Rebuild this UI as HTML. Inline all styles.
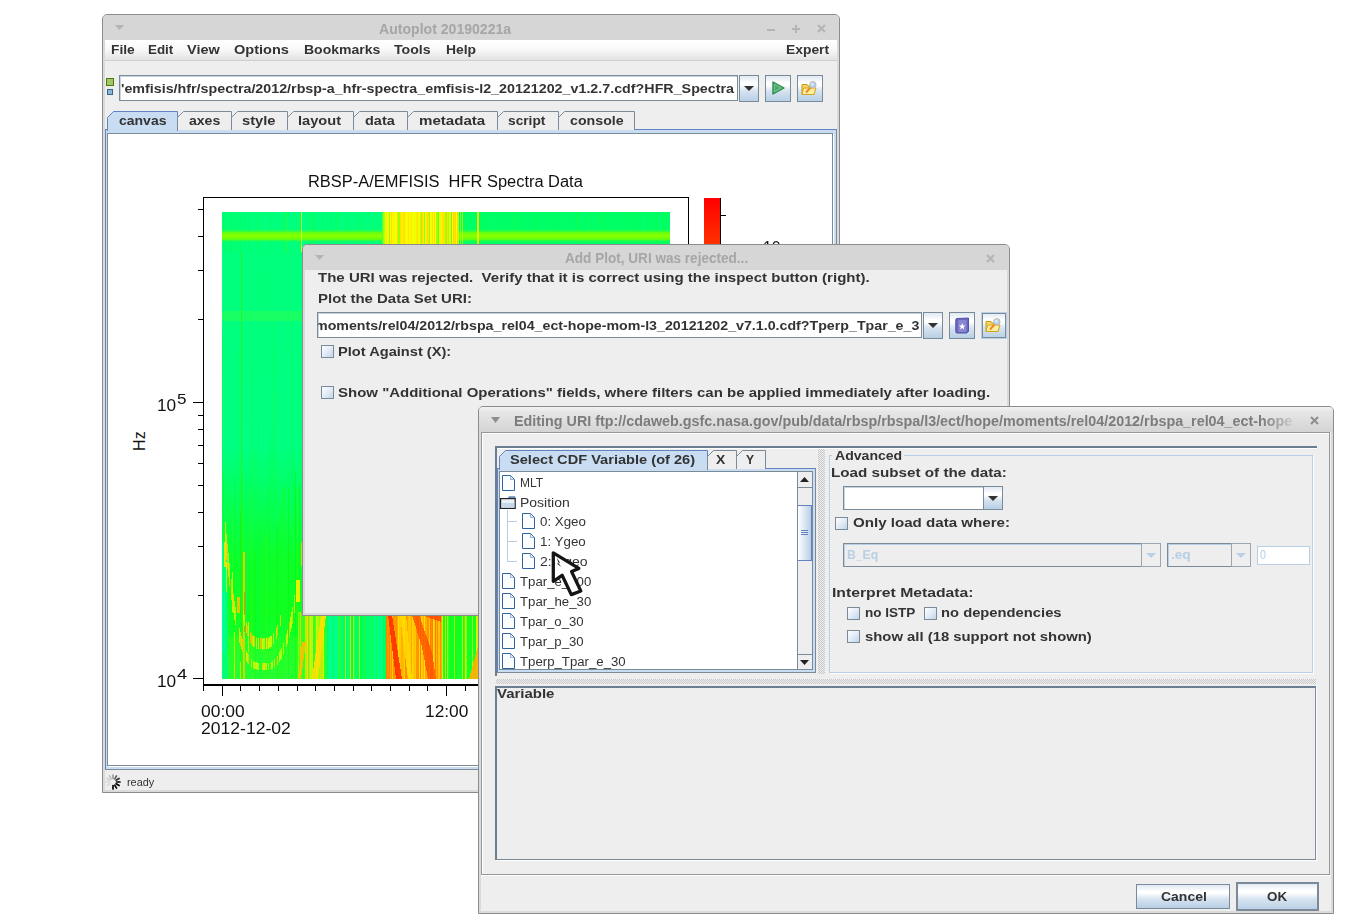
<!DOCTYPE html>
<html><head><meta charset="utf-8"><title>Autoplot</title>
<style>
*{box-sizing:border-box;margin:0;padding:0}
html,body{width:1345px;height:916px;overflow:hidden;background:#fff}
body{position:relative;font-family:"Liberation Sans",sans-serif;color:#333}
.a{position:absolute}
.t{position:absolute;white-space:nowrap;transform-origin:0 0;font-family:"Liberation Sans",sans-serif}
.btn{position:absolute;border:1px solid #7a8a99;background:linear-gradient(#dfe8f2 0%,#fff 28%,#fff 36%,#d6e3f0 60%,#b8cfe5 100%)}
.cb{position:absolute;width:13px;height:13px;border:1px solid #7a8a99;background:linear-gradient(135deg,#fdfeff 0%,#e6eef7 45%,#c0d4e8 100%)}
.tf{position:absolute;background:#fff;border:1px solid #7a8a99;box-shadow:inset 1px 1px 0 #c9d3dc}
</style></head><body>
<!-- main window -->
<div class="a" style="left:102px;top:14px;width:738px;height:779px;background:#eee;border:1px solid #8c8c8c;border-radius:5px 5px 0 0;box-shadow:inset 0 0 0 2px #dadada"></div>
<div class="a" style="left:103px;top:15px;width:736px;height:25px;background:#d6d6d6;border-radius:4px 4px 0 0"></div>
<svg class="a" style="left:115px;top:25px" width="9" height="5" viewBox="0 0 9 5"><path d="M0 0H9L4.5 5Z" fill="#b4b4b4"/></svg>
<div class="t" style="left:379.30px;top:20.50px;font-size:14px;font-weight:bold;line-height:16px;color:#a6a6a6;transform:scaleX(1.0052);">Autoplot 20190221a</div>
<div class="a" style="left:767px;top:29px;width:8px;height:2px;background:#b4b4b4"></div>
<div class="a" style="left:792px;top:28px;width:8px;height:2px;background:#b4b4b4"></div><div class="a" style="left:795px;top:25px;width:2px;height:8px;background:#b4b4b4"></div>
<svg class="a" style="left:817px;top:24px" width="9" height="9" viewBox="0 0 9 9"><path d="M1 1L8 8M8 1L1 8" stroke="#b4b4b4" stroke-width="2.2"/></svg>
<div class="a" style="left:105px;top:40px;width:732px;height:21px;background:linear-gradient(#fff 0%,#fafafa 40%,#ededed 75%,#e2e2e2 100%);border-bottom:1px solid #cfcfcf"></div>
<div class="t" style="left:111.20px;top:43.00px;font-size:12.5px;font-weight:bold;line-height:14px;color:#333;transform:scaleX(1.1028);">File</div>
<div class="t" style="left:148.00px;top:43.00px;font-size:12.5px;font-weight:bold;line-height:14px;color:#333;transform:scaleX(1.0718);">Edit</div>
<div class="t" style="left:187.00px;top:43.00px;font-size:12.5px;font-weight:bold;line-height:14px;color:#333;transform:scaleX(1.1564);">View</div>
<div class="t" style="left:234.40px;top:43.00px;font-size:12.5px;font-weight:bold;line-height:14px;color:#333;transform:scaleX(1.1637);">Options</div>
<div class="t" style="left:303.60px;top:43.00px;font-size:12.5px;font-weight:bold;line-height:14px;color:#333;transform:scaleX(1.1213);">Bookmarks</div>
<div class="t" style="left:394.30px;top:43.00px;font-size:12.5px;font-weight:bold;line-height:14px;color:#333;transform:scaleX(1.1309);">Tools</div>
<div class="t" style="left:445.50px;top:43.00px;font-size:12.5px;font-weight:bold;line-height:14px;color:#333;transform:scaleX(1.1110);">Help</div>
<div class="t" style="left:786.10px;top:43.00px;font-size:12.5px;font-weight:bold;line-height:14px;color:#333;transform:scaleX(1.1072);">Expert</div>
<div class="a" style="left:106px;top:78px;width:8px;height:8px;background:#a3c765;border:1px solid #4c7a10"></div>
<div class="a" style="left:107px;top:89px;width:6px;height:6px;background:#8cb6d6;border:1px solid #34678f"></div>
<div class="tf" style="left:119px;top:75px;width:619px;height:26px"></div>
<div class="t" style="left:121.00px;top:81.00px;font-size:13.5px;font-weight:bold;line-height:15px;color:#333;transform:scaleX(1.0578);">'emfisis/hfr/spectra/2012/rbsp-a_hfr-spectra_emfisis-l2_20121202_v1.2.7.cdf?HFR_Spectra</div>
<div class="btn" style="left:739px;top:75px;width:20px;height:27px"></div>
<svg class="a" style="left:744px;top:86px" width="10" height="5" viewBox="0 0 10 5"><path d="M0 0H10L5.0 5Z" fill="#333"/></svg>
<div class="btn" style="left:765px;top:75px;width:26px;height:27px"></div>
<svg class="a" style="left:772px;top:81px" width="13" height="14" viewBox="0 0 13 14"><path d="M1 1 L12 7 L1 13Z" fill="#6fc08a" stroke="#2b8a4a" stroke-width="1.4" stroke-linejoin="round"/><path d="M3 4.5 L8 7 L3 9.5Z" fill="#45a868"/></svg>
<div class="btn" style="left:797px;top:75px;width:26px;height:27px"></div>
<svg class="a" style="left:801px;top:81px" width="17" height="15" viewBox="0 0 17 15"><path d="M1 3.5 H6 L7 5 H13 V13.5 H1Z" fill="#f6d56a" stroke="#c79a10" stroke-width="1"/><path d="M2.5 7 H15 L13 13.5 H1Z" fill="#fdeea0" stroke="#d0a520" stroke-width="1"/><path d="M5 11.5 L10 6" stroke="#f08a20" stroke-width="2"/><circle cx="11.8" cy="3.8" r="3.3" fill="#aed0f4" stroke="#c9b9a8" stroke-width="1"/><circle cx="11.2" cy="3.2" r="1.6" fill="#d6e8fb"/></svg>
<div class="a" style="left:105px;top:129px;width:732px;height:641px;background:#c8ddf2;border:1px solid #7a8a99;border-top-color:#6382bf;border-left-color:#6382bf"></div>
<div class="a" style="left:107px;top:133px;width:726px;height:633px;background:#fff;border:1px solid #7a8a99;box-shadow:1px 1px 0 #fff"></div>
<svg class="a" style="left:107px;top:111px" width="71" height="20" viewBox="0 0 71 20"><path d="M0.5 20 V6.5 L6.5 0.5 H70.5 V20" fill="#c8ddf2" stroke="#6382bf" stroke-width="1"/></svg>
<div class="t" style="left:118.70px;top:113.70px;font-size:12.5px;font-weight:bold;line-height:14px;color:#333;transform:scaleX(1.1191);">canvas</div>
<svg class="a" style="left:177px;top:111px" width="55" height="19" viewBox="0 0 55 19"><path d="M0.5 19 V6.5 L6.5 0.5 H54.5 V19" fill="#eeeeee" stroke="#7a8a99" stroke-width="1"/></svg>
<div class="t" style="left:188.70px;top:113.70px;font-size:12.5px;font-weight:bold;line-height:14px;color:#333;transform:scaleX(1.1236);">axes</div>
<svg class="a" style="left:231px;top:111px" width="57" height="19" viewBox="0 0 57 19"><path d="M0.5 19 V6.5 L6.5 0.5 H56.5 V19" fill="#eeeeee" stroke="#7a8a99" stroke-width="1"/></svg>
<div class="t" style="left:242.40px;top:113.70px;font-size:12.5px;font-weight:bold;line-height:14px;color:#333;transform:scaleX(1.1773);">style</div>
<svg class="a" style="left:287px;top:111px" width="67" height="19" viewBox="0 0 67 19"><path d="M0.5 19 V6.5 L6.5 0.5 H66.5 V19" fill="#eeeeee" stroke="#7a8a99" stroke-width="1"/></svg>
<div class="t" style="left:298.00px;top:113.70px;font-size:12.5px;font-weight:bold;line-height:14px;color:#333;transform:scaleX(1.1687);">layout</div>
<svg class="a" style="left:353px;top:111px" width="55" height="19" viewBox="0 0 55 19"><path d="M0.5 19 V6.5 L6.5 0.5 H54.5 V19" fill="#eeeeee" stroke="#7a8a99" stroke-width="1"/></svg>
<div class="t" style="left:365.00px;top:113.70px;font-size:12.5px;font-weight:bold;line-height:14px;color:#333;transform:scaleX(1.1589);">data</div>
<svg class="a" style="left:407px;top:111px" width="91" height="19" viewBox="0 0 91 19"><path d="M0.5 19 V6.5 L6.5 0.5 H90.5 V19" fill="#eeeeee" stroke="#7a8a99" stroke-width="1"/></svg>
<div class="t" style="left:418.50px;top:113.70px;font-size:12.5px;font-weight:bold;line-height:14px;color:#333;transform:scaleX(1.2068);">metadata</div>
<svg class="a" style="left:497px;top:111px" width="62" height="19" viewBox="0 0 62 19"><path d="M0.5 19 V6.5 L6.5 0.5 H61.5 V19" fill="#eeeeee" stroke="#7a8a99" stroke-width="1"/></svg>
<div class="t" style="left:507.70px;top:113.70px;font-size:12.5px;font-weight:bold;line-height:14px;color:#333;transform:scaleX(1.0982);">script</div>
<svg class="a" style="left:558px;top:111px" width="77" height="19" viewBox="0 0 77 19"><path d="M0.5 19 V6.5 L6.5 0.5 H76.5 V19" fill="#eeeeee" stroke="#7a8a99" stroke-width="1"/></svg>
<div class="t" style="left:569.70px;top:113.70px;font-size:12.5px;font-weight:bold;line-height:14px;color:#333;transform:scaleX(1.1357);">console</div>
<svg class="a" style="left:105px;top:774px" width="16" height="16" viewBox="-8 -8 16 16"><path d="M0.00 -3.60L0.00 -7.00" stroke="#000" stroke-opacity="0.35" stroke-width="1.7" stroke-linecap="round"/><path d="M1.80 -3.12L3.50 -6.06" stroke="#000" stroke-opacity="0.6" stroke-width="1.7" stroke-linecap="round"/><path d="M3.12 -1.80L6.06 -3.50" stroke="#000" stroke-opacity="0.8" stroke-width="1.7" stroke-linecap="round"/><path d="M3.60 0.00L7.00 0.00" stroke="#000" stroke-opacity="1" stroke-width="1.7" stroke-linecap="round"/><path d="M3.12 1.80L6.06 3.50" stroke="#000" stroke-opacity="1" stroke-width="1.7" stroke-linecap="round"/><path d="M1.80 3.12L3.50 6.06" stroke="#000" stroke-opacity="1" stroke-width="1.7" stroke-linecap="round"/><path d="M0.00 3.60L0.00 7.00" stroke="#000" stroke-opacity="1" stroke-width="1.7" stroke-linecap="round"/><path d="M-1.80 3.12L-3.50 6.06" stroke="#000" stroke-opacity="0.0" stroke-width="1.7" stroke-linecap="round"/><path d="M-3.12 1.80L-6.06 3.50" stroke="#000" stroke-opacity="0.08" stroke-width="1.7" stroke-linecap="round"/><path d="M-3.60 0.00L-7.00 0.00" stroke="#000" stroke-opacity="0.1" stroke-width="1.7" stroke-linecap="round"/><path d="M-3.12 -1.80L-6.06 -3.50" stroke="#000" stroke-opacity="0.12" stroke-width="1.7" stroke-linecap="round"/><path d="M-1.80 -3.12L-3.50 -6.06" stroke="#000" stroke-opacity="0.2" stroke-width="1.7" stroke-linecap="round"/></svg>
<div class="t" style="left:126.50px;top:776.20px;font-size:11px;line-height:12px;color:#333;transform:scaleX(0.9887);">ready</div>
<div class="t" style="left:307.87px;top:172.90px;font-size:16px;line-height:17px;color:#111;transform:scaleX(1.0269);">RBSP-A/EMFISIS  HFR Spectra Data</div>
<svg class="a" style="left:107px;top:133px" width="725" height="633" viewBox="107 133 725 633" shape-rendering="crispEdges"><rect x="203.5" y="197.5" width="485" height="487" fill="none" stroke="#000" stroke-width="1"/><rect x="203" y="685" width="486" height="1" fill="#000"/><rect x="193" y="678" width="10" height="1" fill="#000"/><rect x="198" y="595" width="5" height="1" fill="#000"/><rect x="198" y="546" width="5" height="1" fill="#000"/><rect x="198" y="512" width="5" height="1" fill="#000"/><rect x="198" y="485" width="5" height="1" fill="#000"/><rect x="198" y="463" width="5" height="1" fill="#000"/><rect x="198" y="445" width="5" height="1" fill="#000"/><rect x="198" y="429" width="5" height="1" fill="#000"/><rect x="198" y="415" width="5" height="1" fill="#000"/><rect x="193" y="402" width="10" height="1" fill="#000"/><rect x="198" y="319" width="5" height="1" fill="#000"/><rect x="198" y="270" width="5" height="1" fill="#000"/><rect x="198" y="236" width="5" height="1" fill="#000"/><rect x="198" y="209" width="5" height="1" fill="#000"/><rect x="203" y="686" width="1" height="5" fill="#000"/><rect x="222" y="686" width="1" height="10" fill="#000"/><rect x="240" y="686" width="1" height="5" fill="#000"/><rect x="259" y="686" width="1" height="5" fill="#000"/><rect x="278" y="686" width="1" height="5" fill="#000"/><rect x="297" y="686" width="1" height="5" fill="#000"/><rect x="315" y="686" width="1" height="5" fill="#000"/><rect x="334" y="686" width="1" height="5" fill="#000"/><rect x="353" y="686" width="1" height="5" fill="#000"/><rect x="371" y="686" width="1" height="5" fill="#000"/><rect x="390" y="686" width="1" height="5" fill="#000"/><rect x="409" y="686" width="1" height="5" fill="#000"/><rect x="427" y="686" width="1" height="5" fill="#000"/><rect x="446" y="686" width="1" height="10" fill="#000"/><rect x="465" y="686" width="1" height="5" fill="#000"/><rect x="483" y="686" width="1" height="5" fill="#000"/><rect x="502" y="686" width="1" height="5" fill="#000"/><rect x="521" y="686" width="1" height="5" fill="#000"/><rect x="539" y="686" width="1" height="5" fill="#000"/><rect x="558" y="686" width="1" height="5" fill="#000"/><rect x="577" y="686" width="1" height="5" fill="#000"/><rect x="595" y="686" width="1" height="5" fill="#000"/><rect x="614" y="686" width="1" height="5" fill="#000"/><rect x="633" y="686" width="1" height="5" fill="#000"/><rect x="652" y="686" width="1" height="5" fill="#000"/><rect x="670" y="686" width="1" height="10" fill="#000"/><rect x="689" y="686" width="1" height="5" fill="#000"/><defs><linearGradient id="cbar" x1="0" y1="0" x2="0" y2="1"><stop offset="0" stop-color="#ff0000"/><stop offset="1" stop-color="#ff4000"/></linearGradient></defs><rect x="704" y="198" width="17" height="60" fill="url(#cbar)"/><rect x="720" y="198" width="1" height="60" fill="#000"/><rect x="721" y="215" width="5" height="1" fill="#000"/></svg>
<svg class="a" style="left:222px;top:212px" width="448" height="467" viewBox="0 0 448 467" shape-rendering="crispEdges"><defs><linearGradient id="hb" x1="0" y1="0" x2="0" y2="1"><stop offset="0" stop-color="#00ff7a"/><stop offset=".5" stop-color="#00ff82"/><stop offset=".62" stop-color="#04ff5c"/><stop offset=".74" stop-color="#0cff2c"/><stop offset=".86" stop-color="#10ff20"/><stop offset="1" stop-color="#14ff3c"/></linearGradient><linearGradient id="hband" x1="0" y1="0" x2="0" y2="1"><stop offset="0" stop-color="#30ff40" stop-opacity="0"/><stop offset=".3" stop-color="#70ff08"/><stop offset=".55" stop-color="#88ff00"/><stop offset=".8" stop-color="#60ff10"/><stop offset="1" stop-color="#30ff40" stop-opacity="0"/></linearGradient></defs><rect width="448" height="467" fill="url(#hb)"/><rect x="236" y="0" width="212" height="40" fill="#00ff66"/><rect x="1" y="0" width="1" height="40" fill="#00ff50" opacity="0.45"/><rect x="2" y="0" width="1" height="40" fill="#00ff5a" opacity="0.45"/><rect x="3" y="0" width="1" height="40" fill="#00ff5a" opacity="0.45"/><rect x="4" y="0" width="1" height="40" fill="#00ff5a" opacity="0.45"/><rect x="6" y="0" width="1" height="40" fill="#00ff90" opacity="0.45"/><rect x="7" y="0" width="1" height="40" fill="#00ff50" opacity="0.45"/><rect x="9" y="0" width="1" height="40" fill="#00ff5a" opacity="0.45"/><rect x="10" y="0" width="1" height="40" fill="#10ff48" opacity="0.45"/><rect x="13" y="0" width="1" height="40" fill="#00ff5a" opacity="0.45"/><rect x="16" y="0" width="1" height="40" fill="#10ff48" opacity="0.45"/><rect x="18" y="0" width="1" height="40" fill="#00ff50" opacity="0.45"/><rect x="22" y="0" width="1" height="40" fill="#00ff5a" opacity="0.45"/><rect x="26" y="0" width="1" height="40" fill="#00ff50" opacity="0.45"/><rect x="37" y="0" width="1" height="40" fill="#18ff38" opacity="0.45"/><rect x="43" y="0" width="1" height="40" fill="#00ff90" opacity="0.45"/><rect x="49" y="0" width="1" height="40" fill="#00ff5a" opacity="0.45"/><rect x="61" y="0" width="1" height="40" fill="#18ff38" opacity="0.45"/><rect x="68" y="0" width="1" height="40" fill="#00ff90" opacity="0.45"/><rect x="81" y="0" width="1" height="40" fill="#00ff90" opacity="0.45"/><rect x="88" y="0" width="1" height="40" fill="#10ff48" opacity="0.45"/><rect x="89" y="0" width="1" height="40" fill="#10ff48" opacity="0.45"/><rect x="90" y="0" width="1" height="40" fill="#00ff5a" opacity="0.45"/><rect x="93" y="0" width="1" height="40" fill="#00ff5a" opacity="0.45"/><rect x="101" y="0" width="1" height="40" fill="#00ff5a" opacity="0.45"/><rect x="104" y="0" width="1" height="40" fill="#00ff90" opacity="0.45"/><rect x="105" y="0" width="1" height="40" fill="#00ff50" opacity="0.45"/><rect x="108" y="0" width="1" height="40" fill="#00ff5a" opacity="0.45"/><rect x="109" y="0" width="1" height="40" fill="#00ff50" opacity="0.45"/><rect x="114" y="0" width="1" height="40" fill="#10ff48" opacity="0.45"/><rect x="116" y="0" width="1" height="40" fill="#18ff38" opacity="0.45"/><rect x="120" y="0" width="1" height="40" fill="#00ff90" opacity="0.45"/><rect x="124" y="0" width="1" height="40" fill="#00ff50" opacity="0.45"/><rect x="138" y="0" width="1" height="40" fill="#18ff38" opacity="0.45"/><rect x="166" y="0" width="1" height="40" fill="#00ff50" opacity="0.45"/><rect x="176" y="0" width="1" height="40" fill="#00ff50" opacity="0.45"/><rect x="191" y="0" width="1" height="40" fill="#10ff48" opacity="0.45"/><rect x="199" y="0" width="1" height="40" fill="#00ff5a" opacity="0.45"/><rect x="200" y="0" width="1" height="40" fill="#00ff50" opacity="0.45"/><rect x="203" y="0" width="1" height="40" fill="#10ff48" opacity="0.45"/><rect x="214" y="0" width="1" height="40" fill="#18ff38" opacity="0.45"/><rect x="221" y="0" width="1" height="40" fill="#10ff48" opacity="0.45"/><rect x="223" y="0" width="1" height="40" fill="#00ff90" opacity="0.45"/><rect x="227" y="0" width="1" height="40" fill="#10ff48" opacity="0.45"/><rect x="235" y="0" width="1" height="40" fill="#00ff5a" opacity="0.45"/><rect x="236" y="0" width="1" height="40" fill="#10ff48" opacity="0.45"/><rect x="259" y="0" width="1" height="40" fill="#00ff50" opacity="0.45"/><rect x="266" y="0" width="1" height="40" fill="#10ff48" opacity="0.45"/><rect x="271" y="0" width="1" height="40" fill="#00ff90" opacity="0.45"/><rect x="285" y="0" width="1" height="40" fill="#00ff5a" opacity="0.45"/><rect x="292" y="0" width="1" height="40" fill="#10ff48" opacity="0.45"/><rect x="294" y="0" width="1" height="40" fill="#18ff38" opacity="0.45"/><rect x="313" y="0" width="1" height="40" fill="#00ff50" opacity="0.45"/><rect x="315" y="0" width="1" height="40" fill="#10ff48" opacity="0.45"/><rect x="316" y="0" width="1" height="40" fill="#00ff50" opacity="0.45"/><rect x="322" y="0" width="1" height="40" fill="#00ff5a" opacity="0.45"/><rect x="337" y="0" width="1" height="40" fill="#00ff50" opacity="0.45"/><rect x="343" y="0" width="1" height="40" fill="#00ff90" opacity="0.45"/><rect x="354" y="0" width="1" height="40" fill="#18ff38" opacity="0.45"/><rect x="357" y="0" width="1" height="40" fill="#18ff38" opacity="0.45"/><rect x="359" y="0" width="1" height="40" fill="#00ff90" opacity="0.45"/><rect x="366" y="0" width="1" height="40" fill="#00ff90" opacity="0.45"/><rect x="367" y="0" width="1" height="40" fill="#18ff38" opacity="0.45"/><rect x="375" y="0" width="1" height="40" fill="#00ff90" opacity="0.45"/><rect x="376" y="0" width="1" height="40" fill="#18ff38" opacity="0.45"/><rect x="380" y="0" width="1" height="40" fill="#18ff38" opacity="0.45"/><rect x="382" y="0" width="1" height="40" fill="#00ff5a" opacity="0.45"/><rect x="383" y="0" width="1" height="40" fill="#00ff50" opacity="0.45"/><rect x="386" y="0" width="1" height="40" fill="#00ff5a" opacity="0.45"/><rect x="388" y="0" width="1" height="40" fill="#00ff5a" opacity="0.45"/><rect x="392" y="0" width="1" height="40" fill="#00ff5a" opacity="0.45"/><rect x="394" y="0" width="1" height="40" fill="#00ff5a" opacity="0.45"/><rect x="398" y="0" width="1" height="40" fill="#00ff5a" opacity="0.45"/><rect x="402" y="0" width="1" height="40" fill="#00ff5a" opacity="0.45"/><rect x="407" y="0" width="1" height="40" fill="#00ff50" opacity="0.45"/><rect x="408" y="0" width="1" height="40" fill="#18ff38" opacity="0.45"/><rect x="412" y="0" width="1" height="40" fill="#00ff50" opacity="0.45"/><rect x="416" y="0" width="1" height="40" fill="#00ff50" opacity="0.45"/><rect x="421" y="0" width="1" height="40" fill="#00ff90" opacity="0.45"/><rect x="423" y="0" width="1" height="40" fill="#18ff38" opacity="0.45"/><rect x="430" y="0" width="1" height="40" fill="#18ff38" opacity="0.45"/><rect x="434" y="0" width="1" height="40" fill="#10ff48" opacity="0.45"/><rect x="439" y="0" width="1" height="40" fill="#00ff90" opacity="0.45"/><rect x="440" y="0" width="1" height="40" fill="#18ff38" opacity="0.45"/><rect x="442" y="0" width="1" height="40" fill="#10ff48" opacity="0.45"/><rect x="0" y="119" width="1" height="181" fill="#08ff40" opacity="0.35"/><rect x="1" y="262" width="1" height="205" fill="#00ff30" opacity="0.55"/><rect x="3" y="108" width="1" height="192" fill="#00ff68" opacity="0.35"/><rect x="5" y="269" width="1" height="198" fill="#18ff18" opacity="0.55"/><rect x="6" y="327" width="1" height="140" fill="#18ff18" opacity="0.55"/><rect x="9" y="295" width="1" height="172" fill="#00ff48" opacity="0.55"/><rect x="10" y="289" width="1" height="178" fill="#28ff10" opacity="0.55"/><rect x="12" y="263" width="1" height="204" fill="#00ff30" opacity="0.55"/><rect x="13" y="214" width="1" height="86" fill="#00ff68" opacity="0.35"/><rect x="16" y="136" width="1" height="164" fill="#10ff38" opacity="0.35"/><rect x="18" y="301" width="1" height="166" fill="#08f808" opacity="0.55"/><rect x="19" y="275" width="1" height="192" fill="#00ff30" opacity="0.55"/><rect x="20" y="261" width="1" height="206" fill="#18ff18" opacity="0.55"/><rect x="21" y="292" width="1" height="175" fill="#28ff10" opacity="0.55"/><rect x="24" y="269" width="1" height="198" fill="#00ff48" opacity="0.55"/><rect x="28" y="53" width="1" height="247" fill="#00ff50" opacity="0.35"/><rect x="29" y="279" width="1" height="188" fill="#28ff10" opacity="0.55"/><rect x="30" y="151" width="1" height="149" fill="#10ff38" opacity="0.35"/><rect x="32" y="240" width="1" height="60" fill="#10ff38" opacity="0.35"/><rect x="33" y="340" width="1" height="127" fill="#08f808" opacity="0.55"/><rect x="35" y="330" width="1" height="137" fill="#00ff48" opacity="0.55"/><rect x="36" y="52" width="1" height="248" fill="#00ff50" opacity="0.35"/><rect x="37" y="317" width="1" height="150" fill="#00ff30" opacity="0.55"/><rect x="38" y="296" width="1" height="171" fill="#18ff18" opacity="0.55"/><rect x="40" y="276" width="1" height="191" fill="#00ff48" opacity="0.55"/><rect x="41" y="127" width="1" height="173" fill="#00ff68" opacity="0.35"/><rect x="44" y="311" width="1" height="156" fill="#28ff10" opacity="0.55"/><rect x="45" y="321" width="1" height="146" fill="#28ff10" opacity="0.55"/><rect x="46" y="275" width="1" height="192" fill="#00ff30" opacity="0.55"/><rect x="47" y="59" width="1" height="241" fill="#08ff40" opacity="0.35"/><rect x="48" y="180" width="1" height="120" fill="#00ff68" opacity="0.35"/><rect x="49" y="234" width="1" height="66" fill="#10ff38" opacity="0.35"/><rect x="51" y="102" width="1" height="198" fill="#08ff40" opacity="0.35"/><rect x="52" y="182" width="1" height="118" fill="#10ff38" opacity="0.35"/><rect x="53" y="134" width="1" height="166" fill="#08ff40" opacity="0.35"/><rect x="55" y="312" width="1" height="155" fill="#08f808" opacity="0.55"/><rect x="57" y="308" width="1" height="159" fill="#18ff18" opacity="0.55"/><rect x="59" y="295" width="1" height="172" fill="#00ff30" opacity="0.55"/><rect x="60" y="276" width="1" height="191" fill="#28ff10" opacity="0.55"/><rect x="61" y="340" width="1" height="127" fill="#00ff48" opacity="0.55"/><rect x="62" y="271" width="1" height="196" fill="#18ff18" opacity="0.55"/><rect x="64" y="205" width="1" height="95" fill="#00ff68" opacity="0.35"/><rect x="66" y="276" width="1" height="191" fill="#08f808" opacity="0.55"/><rect x="67" y="190" width="1" height="110" fill="#00ff68" opacity="0.35"/><rect x="69" y="154" width="1" height="146" fill="#00ff68" opacity="0.35"/><rect x="70" y="97" width="1" height="203" fill="#00ff50" opacity="0.35"/><rect x="71" y="224" width="1" height="76" fill="#00ff50" opacity="0.35"/><rect x="72" y="270" width="1" height="197" fill="#00ff30" opacity="0.55"/><rect x="73" y="260" width="1" height="207" fill="#08f808" opacity="0.55"/><rect x="74" y="332" width="1" height="135" fill="#18ff18" opacity="0.55"/><rect x="75" y="276" width="1" height="191" fill="#28ff10" opacity="0.55"/><rect x="76" y="315" width="1" height="152" fill="#00ff48" opacity="0.55"/><rect x="77" y="272" width="1" height="195" fill="#08f808" opacity="0.55"/><rect x="78" y="139" width="1" height="161" fill="#08ff40" opacity="0.35"/><rect x="80" y="261" width="1" height="206" fill="#08f808" opacity="0.55"/><rect x="82" y="300" width="1" height="167" fill="#28ff10" opacity="0.55"/><rect x="83" y="320" width="1" height="147" fill="#18ff18" opacity="0.55"/><rect x="0" y="330" width="6" height="137" fill="#00ff8c" opacity="0.75"/><rect x="0" y="380" width="3" height="60" fill="#00ffa0" opacity="0.9"/><rect x="0" y="99" width="85" height="10" fill="#20ff5c" opacity=".75"/><rect x="19" y="40" width="1" height="427" fill="#28f018" opacity="0.8"/><rect x="64" y="0" width="1" height="40" fill="#30ff30" opacity="0.8"/><rect x="0" y="17" width="448" height="13" fill="url(#hband)"/><rect x="164" y="0" width="1" height="40" fill="#ffee00" opacity="1"/><rect x="165" y="0" width="1" height="40" fill="#f0ff00" opacity="1"/><rect x="166" y="0" width="1" height="40" fill="#ffee00" opacity="1"/><rect x="167" y="0" width="1" height="40" fill="#90ff10" opacity="1"/><rect x="168" y="0" width="1" height="40" fill="#f0ff00" opacity="1"/><rect x="169" y="0" width="1" height="40" fill="#ffe000" opacity="1"/><rect x="170" y="0" width="1" height="40" fill="#f8ff00" opacity="1"/><rect x="171" y="0" width="1" height="40" fill="#fff000" opacity="1"/><rect x="172" y="0" width="1" height="40" fill="#f0ff00" opacity="1"/><rect x="173" y="0" width="1" height="40" fill="#f8ff00" opacity="1"/><rect x="174" y="0" width="1" height="40" fill="#f8ff00" opacity="1"/><rect x="175" y="0" width="1" height="40" fill="#ffd800" opacity="1"/><rect x="176" y="0" width="1" height="40" fill="#a0ff08" opacity="1"/><rect x="177" y="0" width="1" height="40" fill="#90ff10" opacity="1"/><rect x="178" y="0" width="1" height="40" fill="#ffe000" opacity="1"/><rect x="179" y="0" width="1" height="40" fill="#fff000" opacity="1"/><rect x="180" y="0" width="1" height="40" fill="#fff000" opacity="1"/><rect x="181" y="0" width="1" height="40" fill="#ffe000" opacity="1"/><rect x="182" y="0" width="1" height="40" fill="#ffe800" opacity="1"/><rect x="183" y="0" width="1" height="40" fill="#fff000" opacity="1"/><rect x="184" y="0" width="1" height="40" fill="#f8ff00" opacity="1"/><rect x="185" y="0" width="1" height="40" fill="#f0ff00" opacity="1"/><rect x="186" y="0" width="1" height="40" fill="#ffe800" opacity="1"/><rect x="187" y="0" width="1" height="40" fill="#f8ff00" opacity="1"/><rect x="188" y="0" width="1" height="40" fill="#ffee00" opacity="1"/><rect x="189" y="0" width="1" height="40" fill="#fff000" opacity="1"/><rect x="190" y="0" width="1" height="40" fill="#f0ff00" opacity="1"/><rect x="191" y="0" width="1" height="40" fill="#f8ff00" opacity="1"/><rect x="192" y="0" width="1" height="40" fill="#f0ff00" opacity="1"/><rect x="193" y="0" width="1" height="40" fill="#f0ff00" opacity="1"/><rect x="194" y="0" width="1" height="40" fill="#ffee00" opacity="1"/><rect x="195" y="0" width="1" height="40" fill="#ffe000" opacity="1"/><rect x="196" y="0" width="1" height="40" fill="#f0ff00" opacity="1"/><rect x="197" y="0" width="1" height="40" fill="#f0ff00" opacity="1"/><rect x="198" y="0" width="1" height="40" fill="#ffe000" opacity="1"/><rect x="199" y="0" width="1" height="40" fill="#90ff10" opacity="1"/><rect x="200" y="0" width="1" height="40" fill="#ffe000" opacity="1"/><rect x="201" y="0" width="1" height="40" fill="#ffee00" opacity="1"/><rect x="202" y="0" width="1" height="40" fill="#90ff10" opacity="1"/><rect x="203" y="0" width="1" height="40" fill="#f8ff00" opacity="1"/><rect x="204" y="0" width="1" height="40" fill="#ffee00" opacity="1"/><rect x="205" y="0" width="1" height="40" fill="#ffd800" opacity="1"/><rect x="206" y="0" width="1" height="40" fill="#ffe000" opacity="1"/><rect x="207" y="0" width="1" height="40" fill="#90ff10" opacity="1"/><rect x="208" y="0" width="1" height="40" fill="#f8ff00" opacity="1"/><rect x="209" y="0" width="1" height="40" fill="#f0ff00" opacity="1"/><rect x="210" y="0" width="1" height="40" fill="#ffe000" opacity="1"/><rect x="211" y="0" width="1" height="40" fill="#f8ff00" opacity="1"/><rect x="212" y="0" width="1" height="40" fill="#ffe000" opacity="1"/><rect x="213" y="0" width="1" height="40" fill="#f8ff00" opacity="1"/><rect x="214" y="0" width="1" height="40" fill="#90ff10" opacity="1"/><rect x="215" y="0" width="1" height="40" fill="#a0ff08" opacity="1"/><rect x="216" y="0" width="1" height="40" fill="#60ff20" opacity="1"/><rect x="217" y="0" width="1" height="40" fill="#f8ff00" opacity="1"/><rect x="218" y="0" width="1" height="40" fill="#ffee00" opacity="1"/><rect x="219" y="0" width="1" height="40" fill="#f0ff00" opacity="1"/><rect x="220" y="0" width="1" height="40" fill="#ffe800" opacity="1"/><rect x="221" y="0" width="1" height="40" fill="#ffe000" opacity="1"/><rect x="222" y="0" width="1" height="40" fill="#ffe800" opacity="1"/><rect x="223" y="0" width="1" height="40" fill="#a0ff08" opacity="1"/><rect x="224" y="0" width="1" height="40" fill="#90ff10" opacity="1"/><rect x="225" y="0" width="1" height="40" fill="#ffe000" opacity="1"/><rect x="226" y="0" width="1" height="40" fill="#a0ff08" opacity="1"/><rect x="227" y="0" width="1" height="40" fill="#f0ff00" opacity="1"/><rect x="228" y="0" width="1" height="40" fill="#ffee00" opacity="1"/><rect x="229" y="0" width="1" height="40" fill="#60ff20" opacity="1"/><rect x="230" y="0" width="1" height="40" fill="#f0ff00" opacity="1"/><rect x="231" y="0" width="1" height="40" fill="#ffd800" opacity="1"/><rect x="232" y="0" width="1" height="40" fill="#ffe000" opacity="1"/><rect x="233" y="0" width="1" height="40" fill="#ffd800" opacity="1"/><rect x="234" y="0" width="1" height="40" fill="#f8ff00" opacity="1"/><rect x="235" y="0" width="1" height="40" fill="#ffd800" opacity="1"/><rect x="160" y="0" width="1" height="40" fill="#60ff30" opacity="0.9"/><rect x="161" y="0" width="1" height="40" fill="#a0ff10" opacity="0.9"/><rect x="162" y="0" width="1" height="40" fill="#d0ff00" opacity="0.9"/><rect x="163" y="0" width="1" height="40" fill="#e8ff00" opacity="0.9"/><rect x="236" y="0" width="1" height="40" fill="#d0ff00" opacity="0.9"/><rect x="238" y="0" width="1" height="40" fill="#90ff10" opacity="0.9"/><rect x="240" y="0" width="1" height="40" fill="#b0ff10" opacity="0.9"/><rect x="79" y="0" width="1" height="40" fill="#c8ff20" opacity="1"/><rect x="255" y="0" width="2" height="40" fill="#f0f000" opacity="1"/><rect x="76" y="400" width="1" height="67" fill="#a0ff00" opacity="0.85"/><rect x="77" y="400" width="1" height="67" fill="#60ff10" opacity="0.85"/><rect x="78" y="400" width="1" height="67" fill="#ffd000" opacity="0.85"/><rect x="79" y="400" width="1" height="67" fill="#40ff20" opacity="0.85"/><rect x="80" y="400" width="1" height="67" fill="#40ff20" opacity="0.85"/><rect x="81" y="400" width="1" height="67" fill="#30ff30" opacity="0.85"/><rect x="82" y="400" width="1" height="67" fill="#40ff20" opacity="0.85"/><rect x="83" y="400" width="1" height="67" fill="#c0ff00" opacity="0.85"/><rect x="84" y="400" width="1" height="67" fill="#ffd000" opacity="0.85"/><rect x="85" y="400" width="1" height="67" fill="#fff000" opacity="0.85"/><rect x="86" y="400" width="1" height="67" fill="#60ff10" opacity="0.85"/><rect x="87" y="400" width="1" height="67" fill="#ffd000" opacity="0.85"/><rect x="88" y="400" width="1" height="67" fill="#fff000" opacity="0.85"/><rect x="89" y="400" width="1" height="67" fill="#c0ff00" opacity="0.85"/><rect x="90" y="400" width="1" height="67" fill="#ffe800" opacity="0.85"/><rect x="91" y="400" width="1" height="67" fill="#30ff30" opacity="0.85"/><rect x="92" y="400" width="1" height="67" fill="#40ff20" opacity="0.85"/><rect x="93" y="400" width="1" height="67" fill="#60ff10" opacity="0.85"/><rect x="94" y="400" width="1" height="67" fill="#fff000" opacity="0.85"/><rect x="95" y="400" width="1" height="67" fill="#c0ff00" opacity="0.85"/><rect x="96" y="400" width="1" height="67" fill="#c0ff00" opacity="0.85"/><rect x="97" y="400" width="1" height="67" fill="#a0ff00" opacity="0.85"/><rect x="98" y="400" width="1" height="67" fill="#c0ff00" opacity="0.85"/><rect x="99" y="400" width="1" height="67" fill="#ffd000" opacity="0.85"/><rect x="100" y="400" width="1" height="67" fill="#c0ff00" opacity="0.85"/><rect x="101" y="400" width="1" height="67" fill="#fff000" opacity="0.85"/><rect x="102" y="400" width="1" height="67" fill="#30ff30" opacity="0.85"/><rect x="103" y="400" width="1" height="67" fill="#30ff30" opacity="0.85"/><path d="M104 403 L96 467 L90 467 L99 403Z" fill="#ffe000" opacity=".9"/><path d="M84 430 L79 467 L76 467 L80 430Z" fill="#ffc000" opacity=".9"/><rect x="104" y="400" width="60" height="67" fill="#00ff6c"/><rect x="106" y="400" width="14" height="67" fill="#00ff8c"/><rect x="148" y="400" width="14" height="67" fill="#00ff88"/><rect x="104" y="400" width="1" height="67" fill="#30ff10" opacity="0.7"/><rect x="111" y="400" width="1" height="67" fill="#00ff40" opacity="0.7"/><rect x="116" y="400" width="1" height="67" fill="#30ff10" opacity="0.7"/><rect x="117" y="400" width="1" height="67" fill="#30ff10" opacity="0.7"/><rect x="118" y="400" width="1" height="67" fill="#30ff10" opacity="0.7"/><rect x="123" y="400" width="1" height="67" fill="#d0ff00" opacity="0.85"/><rect x="126" y="400" width="1" height="67" fill="#40ff18" opacity="0.7"/><rect x="128" y="400" width="1" height="67" fill="#ffe800" opacity="0.85"/><rect x="130" y="400" width="1" height="67" fill="#00ff40" opacity="0.7"/><rect x="131" y="400" width="1" height="67" fill="#d0ff00" opacity="0.85"/><rect x="132" y="400" width="1" height="67" fill="#30ff10" opacity="0.7"/><rect x="137" y="400" width="1" height="67" fill="#d0ff00" opacity="0.85"/><rect x="138" y="400" width="1" height="67" fill="#00ff40" opacity="0.7"/><rect x="139" y="400" width="1" height="67" fill="#00ff40" opacity="0.7"/><rect x="141" y="400" width="1" height="67" fill="#00ff40" opacity="0.7"/><rect x="142" y="400" width="1" height="67" fill="#30ff10" opacity="0.7"/><rect x="148" y="400" width="1" height="67" fill="#20ff20" opacity="0.7"/><rect x="151" y="400" width="1" height="67" fill="#20ff20" opacity="0.7"/><rect x="154" y="400" width="1" height="67" fill="#20ff20" opacity="0.7"/><rect x="161" y="400" width="1" height="67" fill="#00ff40" opacity="0.7"/><rect x="163" y="400" width="1" height="67" fill="#00ff40" opacity="0.7"/><rect x="164" y="400" width="1" height="67" fill="#ff8000" opacity="1"/><rect x="165" y="400" width="1" height="67" fill="#ff9000" opacity="1"/><rect x="166" y="400" width="1" height="67" fill="#ff9000" opacity="1"/><rect x="167" y="400" width="1" height="67" fill="#ff8000" opacity="1"/><rect x="168" y="400" width="1" height="67" fill="#ffb000" opacity="1"/><rect x="169" y="400" width="1" height="67" fill="#ff9000" opacity="1"/><rect x="170" y="400" width="1" height="67" fill="#ffc800" opacity="1"/><rect x="171" y="400" width="1" height="67" fill="#ff9000" opacity="1"/><rect x="172" y="400" width="1" height="67" fill="#ff9800" opacity="1"/><rect x="173" y="400" width="1" height="67" fill="#ff9800" opacity="1"/><rect x="174" y="400" width="1" height="67" fill="#ff9000" opacity="1"/><rect x="175" y="400" width="1" height="67" fill="#ffa800" opacity="1"/><rect x="176" y="400" width="1" height="67" fill="#ffe000" opacity="1"/><rect x="177" y="400" width="1" height="67" fill="#ffc800" opacity="1"/><rect x="178" y="400" width="1" height="67" fill="#ffc800" opacity="1"/><rect x="179" y="400" width="1" height="67" fill="#ffb000" opacity="1"/><rect x="180" y="400" width="1" height="67" fill="#ffb000" opacity="1"/><rect x="181" y="400" width="1" height="67" fill="#ffc000" opacity="1"/><rect x="182" y="400" width="1" height="67" fill="#ffc800" opacity="1"/><rect x="183" y="400" width="1" height="67" fill="#ff9000" opacity="1"/><rect x="184" y="400" width="1" height="67" fill="#ff9800" opacity="1"/><rect x="185" y="400" width="1" height="67" fill="#ffa800" opacity="1"/><rect x="186" y="400" width="1" height="67" fill="#ffc000" opacity="1"/><rect x="187" y="400" width="1" height="67" fill="#ffc800" opacity="1"/><rect x="188" y="400" width="1" height="67" fill="#ffc800" opacity="1"/><rect x="189" y="400" width="1" height="67" fill="#ffa800" opacity="1"/><rect x="190" y="400" width="1" height="67" fill="#ffd800" opacity="1"/><rect x="191" y="400" width="1" height="67" fill="#ffc800" opacity="1"/><rect x="192" y="400" width="1" height="67" fill="#ffc000" opacity="1"/><rect x="193" y="400" width="1" height="67" fill="#ffc800" opacity="1"/><rect x="194" y="400" width="1" height="67" fill="#ff9800" opacity="1"/><rect x="195" y="400" width="1" height="67" fill="#ff9800" opacity="1"/><rect x="196" y="400" width="1" height="67" fill="#ff9000" opacity="1"/><rect x="197" y="400" width="1" height="67" fill="#ffe000" opacity="1"/><rect x="198" y="400" width="1" height="67" fill="#ff8000" opacity="1"/><rect x="199" y="400" width="1" height="67" fill="#ffd800" opacity="1"/><rect x="200" y="400" width="1" height="67" fill="#ffc800" opacity="1"/><rect x="201" y="400" width="1" height="67" fill="#ffb000" opacity="1"/><rect x="202" y="400" width="1" height="67" fill="#ffe000" opacity="1"/><rect x="203" y="400" width="1" height="67" fill="#ffa800" opacity="1"/><rect x="204" y="400" width="1" height="67" fill="#ffb000" opacity="1"/><rect x="205" y="400" width="1" height="67" fill="#ff9000" opacity="1"/><rect x="206" y="400" width="1" height="67" fill="#ff9800" opacity="1"/><rect x="207" y="400" width="1" height="67" fill="#ffc800" opacity="1"/><rect x="208" y="400" width="1" height="67" fill="#ff8000" opacity="1"/><rect x="209" y="400" width="1" height="67" fill="#ff9000" opacity="1"/><rect x="210" y="400" width="1" height="67" fill="#ff8000" opacity="1"/><rect x="211" y="400" width="1" height="67" fill="#ffe000" opacity="1"/><rect x="212" y="400" width="1" height="67" fill="#ffc800" opacity="1"/><rect x="213" y="400" width="1" height="67" fill="#ff8000" opacity="1"/><rect x="214" y="400" width="1" height="67" fill="#ffb000" opacity="1"/><rect x="215" y="400" width="1" height="67" fill="#ff9000" opacity="1"/><rect x="216" y="400" width="1" height="67" fill="#ffc000" opacity="1"/><rect x="217" y="400" width="1" height="67" fill="#ffc800" opacity="1"/><rect x="218" y="400" width="1" height="67" fill="#ff9000" opacity="1"/><rect x="219" y="400" width="1" height="67" fill="#ffa800" opacity="1"/><path d="M166 403 L170 403 L180 467 L174 467Z" fill="#ff3000" opacity=".9"/><path d="M190 403 L197 403 L210 440 L214 467 L206 467 L200 435Z" fill="#ff5000" opacity=".8"/><path d="M200 403 L219 403 L219 410 Z" fill="#ff4000" opacity=".8"/><path d="M178 403 L184 403 L190 467 L186 467Z" fill="#ffe000" opacity=".8"/><rect x="220" y="400" width="1" height="67" fill="#ffe800" opacity="0.85"/><rect x="223" y="400" width="1" height="67" fill="#c0ff00" opacity="0.85"/><rect x="224" y="400" width="1" height="67" fill="#10ff20" opacity="0.85"/><rect x="225" y="400" width="1" height="67" fill="#e0ff00" opacity="0.85"/><rect x="226" y="400" width="1" height="67" fill="#40ff10" opacity="0.85"/><rect x="228" y="400" width="1" height="67" fill="#10ff20" opacity="0.85"/><rect x="229" y="400" width="1" height="67" fill="#10ff20" opacity="0.85"/><rect x="230" y="400" width="1" height="67" fill="#10ff20" opacity="0.85"/><rect x="231" y="400" width="1" height="67" fill="#10ff20" opacity="0.85"/><rect x="232" y="400" width="1" height="67" fill="#c0ff00" opacity="0.85"/><rect x="233" y="400" width="1" height="67" fill="#10ff20" opacity="0.85"/><rect x="234" y="400" width="1" height="67" fill="#10ff20" opacity="0.85"/><rect x="237" y="400" width="1" height="67" fill="#20ff10" opacity="0.85"/><rect x="239" y="400" width="1" height="67" fill="#20ff10" opacity="0.85"/><rect x="240" y="400" width="1" height="67" fill="#e0ff00" opacity="0.85"/><rect x="241" y="400" width="1" height="67" fill="#10ff20" opacity="0.85"/><rect x="242" y="400" width="1" height="67" fill="#40ff10" opacity="0.85"/><rect x="243" y="400" width="1" height="67" fill="#ffe800" opacity="0.85"/><rect x="244" y="400" width="1" height="67" fill="#a0ff00" opacity="0.85"/><rect x="246" y="400" width="1" height="67" fill="#20ff10" opacity="0.85"/><rect x="249" y="400" width="1" height="67" fill="#20ff10" opacity="0.85"/><rect x="250" y="400" width="1" height="67" fill="#c0ff00" opacity="0.85"/><rect x="254" y="400" width="1" height="67" fill="#e0ff00" opacity="0.85"/><rect x="255" y="400" width="1" height="67" fill="#ffe800" opacity="0.85"/><rect x="256" y="400" width="1" height="67" fill="#40ff10" opacity="0.85"/><path d="M257 430 L257 467 L247 467Z" fill="#ffb000" opacity=".9"/><rect x="2" y="330" width="2" height="25" fill="#ffe000" opacity="0.9"/><rect x="4" y="350" width="1" height="30" fill="#e0ff00" opacity="0.9"/><rect x="10" y="360" width="1" height="40" fill="#d0ff00" opacity="0.9"/><rect x="15" y="385" width="3" height="16" fill="#ffc000" opacity="0.9"/><rect x="21" y="340" width="2" height="127" fill="#ffc800" opacity="0.9"/><rect x="22" y="380" width="1" height="40" fill="#ff8000" opacity="0.9"/><rect x="12" y="420" width="1" height="40" fill="#e0ff00" opacity="0.9"/><rect x="26" y="410" width="1" height="30" fill="#e0ff00" opacity="0.9"/><rect x="74" y="368" width="4" height="22" fill="#fff000" opacity="0.9"/><rect x="80" y="340" width="2" height="40" fill="#ffb000" opacity="0.9"/><rect x="82" y="300" width="1" height="60" fill="#ff9000" opacity="0.9"/><rect x="83" y="130" width="1" height="120" fill="#e0e040" opacity="0.9"/><rect x="12" y="452" width="1" height="15" fill="#ffe000" opacity="0.9"/><rect x="18" y="450" width="1" height="17" fill="#e0ff00" opacity="0.9"/><rect x="6" y="425" width="72" height="42" fill="#70ff10" opacity=".2"/><rect x="3" y="310" width="1" height="28" fill="#ffe000" opacity="0.8"/><rect x="4" y="322" width="1" height="26" fill="#ffe000" opacity="0.8"/><rect x="5" y="332" width="1" height="25" fill="#ffd000" opacity="0.8"/><rect x="6" y="341" width="1" height="24" fill="#d0ff00" opacity="0.8"/><rect x="7" y="351" width="1" height="23" fill="#ffd000" opacity="0.8"/><rect x="9" y="367" width="1" height="21" fill="#ffd000" opacity="0.8"/><rect x="10" y="375" width="1" height="20" fill="#ffd000" opacity="0.8"/><rect x="11" y="382" width="1" height="19" fill="#ffe000" opacity="0.8"/><rect x="12" y="389" width="1" height="19" fill="#e0ff00" opacity="0.8"/><rect x="13" y="395" width="1" height="18" fill="#c0ff10" opacity="0.8"/><rect x="17" y="416" width="1" height="15" fill="#ffe000" opacity="0.8"/><rect x="18" y="420" width="1" height="14" fill="#ffd000" opacity="0.8"/><rect x="19" y="424" width="1" height="13" fill="#ffe000" opacity="0.8"/><rect x="20" y="427" width="1" height="13" fill="#ffd000" opacity="0.8"/><rect x="21" y="399" width="1" height="11" fill="#e0ff00" opacity="0.8"/><rect x="22" y="403" width="1" height="11" fill="#e0ff00" opacity="0.8"/><rect x="24" y="439" width="1" height="10" fill="#f0f000" opacity="0.8"/><rect x="24" y="410" width="1" height="11" fill="#ffd800" opacity="0.8"/><rect x="25" y="441" width="1" height="10" fill="#f0f000" opacity="0.8"/><rect x="25" y="413" width="1" height="11" fill="#ffc000" opacity="0.8"/><rect x="26" y="442" width="1" height="10" fill="#ffd000" opacity="0.8"/><rect x="28" y="420" width="1" height="11" fill="#ffc000" opacity="0.8"/><rect x="29" y="447" width="1" height="8" fill="#d0ff00" opacity="0.8"/><rect x="29" y="421" width="1" height="11" fill="#ffc000" opacity="0.8"/><rect x="30" y="423" width="1" height="11" fill="#ffd800" opacity="0.8"/><rect x="31" y="449" width="1" height="8" fill="#f0f000" opacity="0.8"/><rect x="31" y="424" width="1" height="11" fill="#f0f000" opacity="0.8"/><rect x="32" y="450" width="1" height="7" fill="#ffe000" opacity="0.8"/><rect x="32" y="424" width="1" height="11" fill="#ffc000" opacity="0.8"/><rect x="33" y="450" width="1" height="7" fill="#d0ff00" opacity="0.8"/><rect x="34" y="450" width="1" height="7" fill="#e0ff00" opacity="0.8"/><rect x="34" y="426" width="1" height="11" fill="#e0ff00" opacity="0.8"/><rect x="35" y="451" width="1" height="7" fill="#f0f000" opacity="0.8"/><rect x="36" y="451" width="1" height="7" fill="#e0ff00" opacity="0.8"/><rect x="36" y="426" width="1" height="11" fill="#f0f000" opacity="0.8"/><rect x="38" y="426" width="1" height="11" fill="#ffc000" opacity="0.8"/><rect x="39" y="426" width="1" height="11" fill="#ffc000" opacity="0.8"/><rect x="40" y="451" width="1" height="7" fill="#ffd000" opacity="0.8"/><rect x="40" y="427" width="1" height="11" fill="#e0ff00" opacity="0.8"/><rect x="41" y="451" width="1" height="7" fill="#f0f000" opacity="0.8"/><rect x="41" y="426" width="1" height="11" fill="#f0f000" opacity="0.8"/><rect x="42" y="451" width="1" height="7" fill="#e0ff00" opacity="0.8"/><rect x="42" y="426" width="1" height="11" fill="#f0f000" opacity="0.8"/><rect x="43" y="451" width="1" height="7" fill="#ffd000" opacity="0.8"/><rect x="44" y="451" width="1" height="7" fill="#d0ff00" opacity="0.8"/><rect x="44" y="426" width="1" height="11" fill="#e0ff00" opacity="0.8"/><rect x="45" y="426" width="1" height="11" fill="#ffc000" opacity="0.8"/><rect x="46" y="451" width="1" height="7" fill="#c0ff10" opacity="0.8"/><rect x="46" y="426" width="1" height="11" fill="#e0ff00" opacity="0.8"/><rect x="47" y="425" width="1" height="11" fill="#e0ff00" opacity="0.8"/><rect x="48" y="424" width="1" height="11" fill="#e0ff00" opacity="0.8"/><rect x="49" y="450" width="1" height="7" fill="#f0f000" opacity="0.8"/><rect x="49" y="424" width="1" height="11" fill="#f0f000" opacity="0.8"/><rect x="50" y="449" width="1" height="8" fill="#c0ff10" opacity="0.8"/><rect x="51" y="421" width="1" height="11" fill="#f0f000" opacity="0.8"/><rect x="52" y="447" width="1" height="8" fill="#ffd000" opacity="0.8"/><rect x="54" y="416" width="1" height="11" fill="#ffd800" opacity="0.8"/><rect x="55" y="444" width="1" height="9" fill="#ffd000" opacity="0.8"/><rect x="55" y="413" width="1" height="11" fill="#ffc000" opacity="0.8"/><rect x="57" y="440" width="1" height="10" fill="#e0ff00" opacity="0.8"/><rect x="58" y="438" width="1" height="10" fill="#d0ff00" opacity="0.8"/><rect x="58" y="403" width="1" height="11" fill="#ffd800" opacity="0.8"/><rect x="59" y="436" width="1" height="11" fill="#c0ff10" opacity="0.8"/><rect x="61" y="431" width="1" height="12" fill="#d0ff00" opacity="0.8"/><rect x="64" y="422" width="1" height="13" fill="#c0ff10" opacity="0.8"/><rect x="65" y="418" width="1" height="14" fill="#ffe000" opacity="0.8"/><rect x="67" y="410" width="1" height="15" fill="#ffd000" opacity="0.8"/><rect x="68" y="405" width="1" height="15" fill="#e0ff00" opacity="0.8"/><rect x="69" y="400" width="1" height="16" fill="#f0f000" opacity="0.8"/><rect x="70" y="395" width="1" height="17" fill="#ffd000" opacity="0.8"/><rect x="72" y="383" width="1" height="18" fill="#e0ff00" opacity="0.8"/><rect x="74" y="370" width="1" height="20" fill="#e0ff00" opacity="0.8"/><rect x="79" y="330" width="1" height="24" fill="#ffd000" opacity="0.8"/></svg>
<div class="t" style="left:157.32px;top:397.40px;font-size:16px;line-height:17px;color:#111;transform:scaleX(1.0770);">10</div>
<div class="t" style="left:177.20px;top:390.40px;font-size:15px;line-height:17px;color:#111;transform:scaleX(1.1375);">5</div>
<div class="t" style="left:157.32px;top:673.00px;font-size:16px;line-height:17px;color:#111;transform:scaleX(1.0770);">10</div>
<div class="t" style="left:177.00px;top:665.30px;font-size:15px;line-height:17px;color:#111;transform:scaleX(1.2125);">4</div>
<div class="t" style="left:763.41px;top:238.70px;font-size:16px;line-height:17px;color:#111;transform:scaleX(0.9883);">10</div>
<div class="t" style="left:200.50px;top:703.20px;font-size:16px;line-height:17px;color:#111;transform:scaleX(1.0887);">00:00</div>
<div class="t" style="left:200.50px;top:719.80px;font-size:16px;line-height:17px;color:#111;transform:scaleX(1.0971);">2012-12-02</div>
<div class="t" style="left:424.72px;top:703.20px;font-size:16px;line-height:17px;color:#111;transform:scaleX(1.0833);">12:00</div>
<div class="a" style="left:134px;top:431px;width:12px;height:20px"><div style="position:absolute;left:0;top:20px;transform-origin:0 0;transform:rotate(-90deg);font:16px/12px 'Liberation Sans',sans-serif;color:#111;white-space:nowrap;letter-spacing:.3px">Hz</div></div>
<!-- add plot dialog -->
<div class="a" style="left:302px;top:244px;width:708px;height:372px;background:#eee;border:1px solid #8c8c8c;border-radius:5px 5px 0 0;box-shadow:inset 0 0 0 2px #dadada"></div>
<div class="a" style="left:303px;top:245px;width:706px;height:25px;background:#d6d6d6;border-radius:4px 4px 0 0"></div>
<svg class="a" style="left:315px;top:255px" width="9" height="5" viewBox="0 0 9 5"><path d="M0 0H9L4.5 5Z" fill="#b4b4b4"/></svg>
<div class="t" style="left:565.10px;top:250.00px;font-size:14px;font-weight:bold;line-height:16px;color:#a6a6a6;transform:scaleX(0.9689);">Add Plot, URI was rejected...</div>
<svg class="a" style="left:986px;top:254px" width="9" height="9" viewBox="0 0 9 9"><path d="M1 1L8 8M8 1L1 8" stroke="#b4b4b4" stroke-width="2.2"/></svg>
<div class="t" style="left:317.50px;top:270.70px;font-size:12.5px;font-weight:bold;line-height:14px;color:#333;transform:scaleX(1.2016);">The URI was rejected.  Verify that it is correct using the inspect button (right).</div>
<div class="t" style="left:317.50px;top:291.50px;font-size:12.5px;font-weight:bold;line-height:14px;color:#333;transform:scaleX(1.1977);">Plot the Data Set URI:</div>
<div class="tf" style="left:317px;top:312px;width:605px;height:26px"></div>
<div class="a" style="left:318px;top:313px;width:603px;height:24px;overflow:hidden"><div class="a" style="left:-318px;top:-313px"><div class="t" style="left:315.00px;top:318.00px;font-size:13.5px;font-weight:bold;line-height:15px;color:#333;transform:scaleX(1.0527);">moments/rel04/2012/rbspa_rel04_ect-hope-mom-l3_20121202_v7.1.0.cdf?Tperp_Tpar_e_3</div>
</div></div>
<div class="btn" style="left:923px;top:312px;width:20px;height:27px"></div>
<svg class="a" style="left:928px;top:323px" width="10" height="5" viewBox="0 0 10 5"><path d="M0 0H10L5.0 5Z" fill="#333"/></svg>
<div class="btn" style="left:949px;top:312px;width:26px;height:27px"></div>
<svg class="a" style="left:955px;top:317px" width="15" height="17" viewBox="0 0 15 17"><path d="M2 1.5 L13.5 1 V14.5 L11.5 16 H2 Q0.8 16 0.8 14.8 V3 Q0.8 1.5 2 1.5Z" fill="#6a66bd" stroke="#5550a8" stroke-width="1"/><rect x="3.2" y="3" width="8.3" height="12" fill="#8a86d2"/><path d="M7.2 6 L8.1 8.4 L10.6 8.5 L8.6 10 L9.3 12.4 L7.2 11 L5.1 12.4 L5.8 10 L3.8 8.5 L6.3 8.4Z" fill="#fff"/></svg>
<div class="btn" style="left:981px;top:312px;width:26px;height:27px;border-color:#b8cfe5;box-shadow:inset 0 0 0 1px #7a8a99"></div>
<svg class="a" style="left:985px;top:318px" width="17" height="15" viewBox="0 0 17 15"><path d="M1 3.5 H6 L7 5 H13 V13.5 H1Z" fill="#f6d56a" stroke="#c79a10" stroke-width="1"/><path d="M2.5 7 H15 L13 13.5 H1Z" fill="#fdeea0" stroke="#d0a520" stroke-width="1"/><path d="M5 11.5 L10 6" stroke="#f08a20" stroke-width="2"/><circle cx="11.8" cy="3.8" r="3.3" fill="#aed0f4" stroke="#c9b9a8" stroke-width="1"/><circle cx="11.2" cy="3.2" r="1.6" fill="#d6e8fb"/></svg>
<div class="cb" style="left:321px;top:345px"></div>
<div class="t" style="left:338.20px;top:344.70px;font-size:12.5px;font-weight:bold;line-height:14px;color:#333;transform:scaleX(1.1702);">Plot Against (X):</div>
<div class="cb" style="left:321px;top:386px"></div>
<div class="t" style="left:338.20px;top:385.70px;font-size:12.5px;font-weight:bold;line-height:14px;color:#333;transform:scaleX(1.1991);">Show "Additional Operations" fields, where filters can be applied immediately after loading.</div>
<!-- editing uri dialog -->
<div class="a" style="left:478px;top:406px;width:856px;height:508px;background:#eee;border:1px solid #8c8c8c;border-radius:5px 5px 0 0;box-shadow:inset 0 0 0 2px #dadada"></div>
<div class="a" style="left:479px;top:407px;width:854px;height:25px;background:linear-gradient(#f2f2f2,#e6e6e6 20%,#d4d4d4);border-radius:4px 4px 0 0"></div>
<div class="a" style="left:481px;top:432px;width:849px;height:443px;border:1px solid #979797;box-shadow:inset 1px 1px 0 #fff,0 1px 0 #fff"></div>
<svg class="a" style="left:491px;top:417px" width="9" height="6" viewBox="0 0 9 6"><path d="M0 0H9L4.5 6Z" fill="#8e8e8e"/></svg>
<div class="a" style="left:510px;top:408px;width:790px;height:23px;overflow:hidden;-webkit-mask-image:linear-gradient(90deg,#000 0,#000 752px,rgba(0,0,0,.15) 784px,transparent 790px);mask-image:linear-gradient(90deg,#000 0,#000 752px,rgba(0,0,0,.15) 784px,transparent 790px)"><div class="a" style="left:-510px;top:-408px"><div class="t" style="left:514.00px;top:413.20px;font-size:14px;font-weight:bold;line-height:16px;color:#7c7c7c;transform:scaleX(1.0239);">Editing URI ftp://cdaweb.gsfc.nasa.gov/pub/data/rbsp/rbspa/l3/ect/hope/moments/rel04/2012/rbspa_rel04_ect-hope</div>
</div></div>
<svg class="a" style="left:1310px;top:416px" width="9" height="9" viewBox="0 0 9 9"><path d="M1 1L8 8M8 1L1 8" stroke="#8e8e8e" stroke-width="2"/></svg>
<div class="a" style="left:495px;top:446px;width:822px;height:230px;border-top:2px solid #6c7f92;border-left:2px solid #6c7f92"></div>
<div class="a" style="left:497px;top:448px;width:820px;height:1px;background:#fff"></div>
<div class="a" style="left:497px;top:468px;width:319px;height:205px;background:#c8ddf2;border:1px solid #7a8a99;border-top-color:#6382bf;border-left-color:#6382bf"></div>
<div class="a" style="left:499px;top:471px;width:314px;height:199px;background:#fff;border:1px solid #7a8a99"></div>
<svg class="a" style="left:499px;top:450px" width="209" height="20" viewBox="0 0 209 20"><path d="M0.5 20 V6.5 L6.5 0.5 H208.5 V20" fill="#c8ddf2" stroke="#6382bf" stroke-width="1"/></svg>
<div class="t" style="left:509.70px;top:452.70px;font-size:12.5px;font-weight:bold;line-height:14px;color:#333;transform:scaleX(1.1686);">Select CDF Variable (of 26)</div>
<svg class="a" style="left:707px;top:450px" width="30" height="19" viewBox="0 0 30 19"><path d="M0.5 19 V6.5 L6.5 0.5 H29.5 V19" fill="#eeeeee" stroke="#7a8a99" stroke-width="1"/></svg>
<div class="t" style="left:716.30px;top:452.70px;font-size:12.5px;font-weight:bold;line-height:14px;color:#333;transform:scaleX(1.1111);">X</div>
<svg class="a" style="left:736px;top:450px" width="30" height="19" viewBox="0 0 30 19"><path d="M0.5 19 V6.5 L6.5 0.5 H29.5 V19" fill="#eeeeee" stroke="#7a8a99" stroke-width="1"/></svg>
<div class="t" style="left:745.80px;top:452.70px;font-size:12.5px;font-weight:bold;line-height:14px;color:#333;transform:scaleX(0.9667);">Y</div>
<div class="a" style="left:507px;top:510px;width:1px;height:52px;background:#b8cfe5"></div>
<svg class="a" style="left:502px;top:475px" width="14" height="16" viewBox="0 0 14 16"><path d="M0.5 0.5 H8.5 L12.5 4.5 V15.5 H0.5Z" fill="#fbfdff" stroke="#2f639f" stroke-width="1"/><path d="M8.5 1 V4.5 H12" fill="#dbe7f4" stroke="#7ea3cf" stroke-width=".8"/></svg>
<div class="t" style="left:519.54px;top:476.40px;font-size:12.5px;line-height:14px;color:#333;transform:scaleX(0.9600);">MLT</div>
<svg class="a" style="left:500px;top:496px" width="16" height="13" viewBox="0 0 16 13"><path d="M8 2.5 L9 0.8 H15 V3Z" fill="#7f9fca" stroke="#4a6fa5" stroke-width=".8"/><rect x="0.6" y="2.6" width="14.6" height="9.8" fill="#e9f0f8" stroke="#222" stroke-width="1.2"/><rect x="1.6" y="7" width="12.6" height="4.6" fill="#c6d8ec"/></svg>
<div class="t" style="left:519.88px;top:495.70px;font-size:12.5px;line-height:14px;color:#333;transform:scaleX(1.1191);">Position</div>
<svg class="a" style="left:522px;top:513px" width="14" height="16" viewBox="0 0 14 16"><path d="M0.5 0.5 H8.5 L12.5 4.5 V15.5 H0.5Z" fill="#fbfdff" stroke="#2f639f" stroke-width="1"/><path d="M8.5 1 V4.5 H12" fill="#dbe7f4" stroke="#7ea3cf" stroke-width=".8"/></svg>
<div class="a" style="left:507px;top:521px;width:10px;height:1px;background:#b8cfe5"></div>
<div class="t" style="left:540.40px;top:514.70px;font-size:12.5px;line-height:14px;color:#333;transform:scaleX(1.0663);">0: Xgeo</div>
<svg class="a" style="left:522px;top:533px" width="14" height="16" viewBox="0 0 14 16"><path d="M0.5 0.5 H8.5 L12.5 4.5 V15.5 H0.5Z" fill="#fbfdff" stroke="#2f639f" stroke-width="1"/><path d="M8.5 1 V4.5 H12" fill="#dbe7f4" stroke="#7ea3cf" stroke-width=".8"/></svg>
<div class="a" style="left:507px;top:541px;width:10px;height:1px;background:#b8cfe5"></div>
<div class="t" style="left:540.40px;top:534.70px;font-size:12.5px;line-height:14px;color:#333;transform:scaleX(1.0663);">1: Ygeo</div>
<svg class="a" style="left:522px;top:553px" width="14" height="16" viewBox="0 0 14 16"><path d="M0.5 0.5 H8.5 L12.5 4.5 V15.5 H0.5Z" fill="#fbfdff" stroke="#2f639f" stroke-width="1"/><path d="M8.5 1 V4.5 H12" fill="#dbe7f4" stroke="#7ea3cf" stroke-width=".8"/></svg>
<div class="a" style="left:507px;top:561px;width:10px;height:1px;background:#b8cfe5"></div>
<div class="t" style="left:540.40px;top:554.70px;font-size:12.5px;line-height:14px;color:#333;transform:scaleX(1.1217);">2: Zgeo</div>
<svg class="a" style="left:502px;top:573px" width="14" height="16" viewBox="0 0 14 16"><path d="M0.5 0.5 H8.5 L12.5 4.5 V15.5 H0.5Z" fill="#fbfdff" stroke="#2f639f" stroke-width="1"/><path d="M8.5 1 V4.5 H12" fill="#dbe7f4" stroke="#7ea3cf" stroke-width=".8"/></svg>
<div class="t" style="left:519.70px;top:574.70px;font-size:12.5px;line-height:14px;color:#333;transform:scaleX(1.0569);">Tpar_e_200</div>
<svg class="a" style="left:502px;top:593px" width="14" height="16" viewBox="0 0 14 16"><path d="M0.5 0.5 H8.5 L12.5 4.5 V15.5 H0.5Z" fill="#fbfdff" stroke="#2f639f" stroke-width="1"/><path d="M8.5 1 V4.5 H12" fill="#dbe7f4" stroke="#7ea3cf" stroke-width=".8"/></svg>
<div class="t" style="left:519.70px;top:594.70px;font-size:12.5px;line-height:14px;color:#333;transform:scaleX(1.0569);">Tpar_he_30</div>
<svg class="a" style="left:502px;top:613px" width="14" height="16" viewBox="0 0 14 16"><path d="M0.5 0.5 H8.5 L12.5 4.5 V15.5 H0.5Z" fill="#fbfdff" stroke="#2f639f" stroke-width="1"/><path d="M8.5 1 V4.5 H12" fill="#dbe7f4" stroke="#7ea3cf" stroke-width=".8"/></svg>
<div class="t" style="left:519.70px;top:614.70px;font-size:12.5px;line-height:14px;color:#333;transform:scaleX(1.0527);">Tpar_o_30</div>
<svg class="a" style="left:502px;top:633px" width="14" height="16" viewBox="0 0 14 16"><path d="M0.5 0.5 H8.5 L12.5 4.5 V15.5 H0.5Z" fill="#fbfdff" stroke="#2f639f" stroke-width="1"/><path d="M8.5 1 V4.5 H12" fill="#dbe7f4" stroke="#7ea3cf" stroke-width=".8"/></svg>
<div class="t" style="left:519.70px;top:634.70px;font-size:12.5px;line-height:14px;color:#333;transform:scaleX(1.0527);">Tpar_p_30</div>
<svg class="a" style="left:502px;top:653px" width="14" height="16" viewBox="0 0 14 16"><path d="M0.5 0.5 H8.5 L12.5 4.5 V15.5 H0.5Z" fill="#fbfdff" stroke="#2f639f" stroke-width="1"/><path d="M8.5 1 V4.5 H12" fill="#dbe7f4" stroke="#7ea3cf" stroke-width=".8"/></svg>
<div class="t" style="left:519.70px;top:654.70px;font-size:12.5px;line-height:14px;color:#333;transform:scaleX(1.0558);">Tperp_Tpar_e_30</div>
<div class="a" style="left:797px;top:472px;width:15px;height:197px;background:#eee;border-left:1px solid #7a8a99"></div>
<div class="a" style="left:798px;top:472px;width:14px;height:16px;border-bottom:1px solid #7a8a99;background:#eee"></div>
<svg class="a" style="left:800px;top:477px" width="9" height="5" viewBox="0 0 9 5"><path d="M0 5H9L4.5 0Z" fill="#222"/></svg>
<div class="a" style="left:798px;top:654px;width:14px;height:15px;border-top:1px solid #7a8a99;background:#eee"></div>
<svg class="a" style="left:800px;top:660px" width="9" height="5" viewBox="0 0 9 5"><path d="M0 0H9L4.5 5Z" fill="#222"/></svg>
<div class="a" style="left:798px;top:505px;width:14px;height:56px;border:1px solid #6382bf;border-left:none;background:linear-gradient(90deg,#fff 0%,#e6eef7 35%,#b8cfe5 100%)"></div>
<div class="a" style="left:801px;top:530px;width:7px;height:1px;background:#6382bf;box-shadow:0 2px 0 #6382bf,0 4px 0 #6382bf"></div>
<div class="a" style="left:818px;top:449px;width:7px;height:225px;background:repeating-conic-gradient(#c6c6c6 0 25%,#f0f0f0 0 50%) 0 0/2px 2px"></div>
<div class="a" style="left:826px;top:449px;width:490px;height:226px;background:#eee"></div>
<div class="a" style="left:829px;top:455px;width:484px;height:218px;border:1px solid #b8cfe5;box-shadow:1px 1px 0 #fff"></div>
<div class="a" style="left:832px;top:450px;width:72px;height:12px;background:#eee"></div>
<div class="t" style="left:834.50px;top:448.50px;font-size:12.5px;font-weight:bold;line-height:14px;color:#333;transform:scaleX(1.1251);">Advanced</div>
<div class="t" style="left:831.20px;top:465.70px;font-size:12.5px;font-weight:bold;line-height:14px;color:#333;transform:scaleX(1.2171);">Load subset of the data<span>:</span></div>
<div class="tf" style="left:843px;top:486px;width:141px;height:24px"></div>
<div class="btn" style="left:983px;top:486px;width:20px;height:24px"></div>
<svg class="a" style="left:988px;top:496px" width="10" height="5" viewBox="0 0 10 5"><path d="M0 0H10L5.0 5Z" fill="#333"/></svg>
<div class="cb" style="left:835px;top:517px"></div>
<div class="t" style="left:853.00px;top:516.40px;font-size:12.5px;font-weight:bold;line-height:14px;color:#333;transform:scaleX(1.2088);">Only load data where:</div>
<div class="a" style="left:843px;top:543px;width:299px;height:24px;border:1px solid #7a8a99;box-shadow:inset 1px 1px 0 #b8cfe5"></div>
<div class="a" style="left:1141px;top:543px;width:20px;height:24px;border:1px solid #9aa7b3"></div>
<svg class="a" style="left:1146px;top:553px" width="10" height="5" viewBox="0 0 10 5"><path d="M0 0H10L5.0 5Z" fill="#b8cfe5"/></svg>
<div class="t" style="left:846.70px;top:548.20px;font-size:12.5px;font-weight:bold;line-height:14px;color:#b8cfe5;transform:scaleX(0.9739);">B_Eq</div>
<div class="a" style="left:1167px;top:543px;width:65px;height:24px;border:1px solid #7a8a99;box-shadow:inset 1px 1px 0 #b8cfe5"></div>
<div class="a" style="left:1231px;top:543px;width:20px;height:24px;border:1px solid #9aa7b3"></div>
<svg class="a" style="left:1236px;top:553px" width="10" height="5" viewBox="0 0 10 5"><path d="M0 0H10L5.0 5Z" fill="#b8cfe5"/></svg>
<div class="t" style="left:1171.00px;top:548.20px;font-size:12.5px;font-weight:bold;line-height:14px;color:#b8cfe5;transform:scaleX(1.0904);">.eq</div>
<div class="a" style="left:1257px;top:546px;width:53px;height:19px;background:#fff;border:1px solid #b8cfe5"></div>
<div class="t" style="left:1260.00px;top:548.20px;font-size:12.5px;line-height:14px;color:#b8cfe5;transform:scaleX(0.8571);">0</div>
<div class="t" style="left:831.50px;top:585.70px;font-size:12.5px;font-weight:bold;line-height:14px;color:#333;transform:scaleX(1.2581);">Interpret Metadata<span>:</span></div>
<div class="cb" style="left:847px;top:607px"></div>
<div class="t" style="left:864.70px;top:606.40px;font-size:12.5px;font-weight:bold;line-height:14px;color:#333;transform:scaleX(1.0825);">no ISTP</div>
<div class="cb" style="left:924px;top:607px"></div>
<div class="t" style="left:941.40px;top:606.40px;font-size:12.5px;font-weight:bold;line-height:14px;color:#333;transform:scaleX(1.1806);">no dependencies</div>
<div class="cb" style="left:847px;top:630px"></div>
<div class="t" style="left:864.70px;top:629.70px;font-size:12.5px;font-weight:bold;line-height:14px;color:#333;transform:scaleX(1.1876);">show all (18 support not shown)</div>
<div class="a" style="left:496px;top:679px;width:820px;height:5px;background:repeating-conic-gradient(#c6c6c6 0 25%,#f0f0f0 0 50%) 0 0/2px 2px"></div>
<div class="a" style="left:495px;top:686px;width:821px;height:174px;border:1px solid #7a8a99;border-top:2px solid #6c7f92;border-left:2px solid #6c7f92;box-shadow:1px 1px 0 #fff"></div>
<div class="t" style="left:497.20px;top:687.00px;font-size:12.5px;font-weight:bold;line-height:14px;color:#333;transform:scaleX(1.1980);">Variable</div>
<div class="btn" style="left:1136px;top:884px;width:94px;height:25px"></div>
<div class="t" style="left:1160.70px;top:890.00px;font-size:12.5px;font-weight:bold;line-height:14px;color:#333;transform:scaleX(1.1180);">Cancel</div>
<div class="btn" style="left:1236px;top:882px;width:83px;height:29px;box-shadow:inset 0 0 0 1px #7a8a99"></div>
<div class="t" style="left:1267.40px;top:890.00px;font-size:12.5px;font-weight:bold;line-height:14px;color:#333;transform:scaleX(1.0736);">OK</div>
<svg class="a" style="left:545px;top:545px" width="45" height="55" viewBox="545 545 45 55"><path d="M553.3 552.9 L553.3 581.3 L562.1 575.3 L571.3 594.6 L580.8 591 L571.6 571.6 L578.8 568.4 Z" fill="#fff" stroke="#151515" stroke-width="3.3" stroke-linejoin="round"/><path d="M556.5 557.5 l3.5 5 l-1.6 .4 l3 4.2 l-4.4 -3.4 l1.6 -.6z" fill="#222"/></svg>
</body></html>
